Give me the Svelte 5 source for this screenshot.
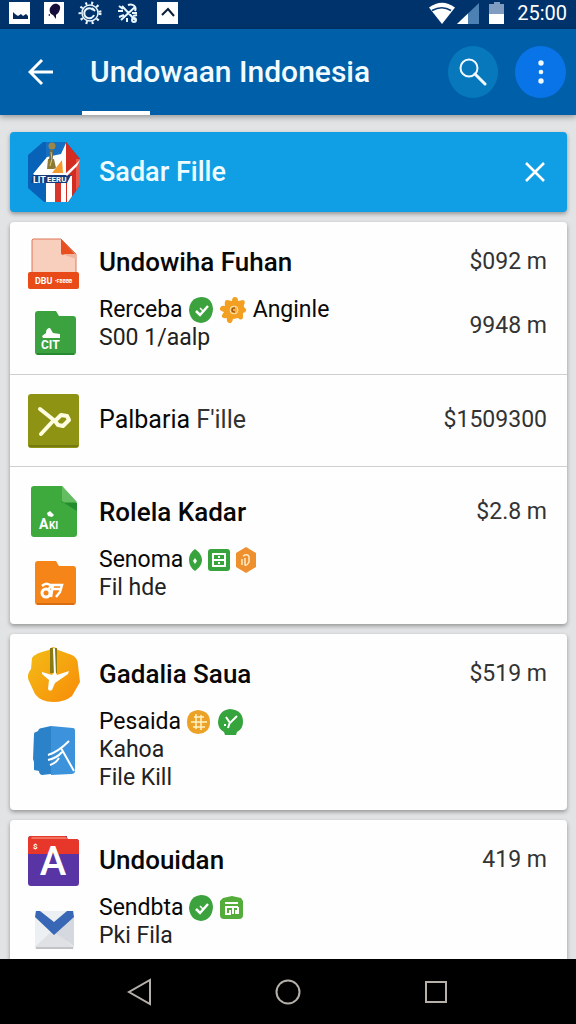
<script>
	let bannerOpen = true;

	const cards = [
		[
			{
				icon: "pdf",
				name: "Undowiha Fuhan",
				amount: "$092 m",
				subIcon: "greenFolder",
				sub: "Rerceba",
				badges: ["check", "flower"],
				after: "Anginle",
				lines: ["S00 1/aalp"],
				subAmount: "9948 m"
			},
			{ icon: "olive", name: "Palbaria", rest: "F'ille", light: true, amount: "$1509300" },
			{
				icon: "greenDoc",
				name: "Rolela Kadar",
				amount: "$2.8 m",
				subIcon: "orangeFolder",
				sub: "Senoma",
				badges: ["leaf", "grid", "hex"],
				lines: ["Fil hde"]
			}
		],
		[
			{
				icon: "gold",
				name: "Gadalia Saua",
				amount: "$519 m",
				subIcon: "blueBook",
				sub: "Pesaida",
				badges: ["coin", "plant"],
				lines: ["Kahoa", "File Kill"]
			}
		],
		[
			{
				icon: "letter",
				name: "Undouidan",
				amount: "419 m",
				subIcon: "mail",
				sub: "Sendbta",
				badges: ["check", "house"],
				lines: ["Pki Fila"]
			}
		]
	];
</script>

<svelte:head>
	<title>Undowaan Indonesia</title>
</svelte:head>

<div class="screen">
	<div class="status">
		<div class="status-group left">
			<svg width="22" height="24" viewBox="0 0 22 24">
				<rect y="1" width="21" height="22" fill="#fff" />
				<path d="M4 11v7h15v-3l-2-2-3 2-2-2-3 2-3-2z" fill="#06295c" />
			</svg>
			<svg width="20" height="24" viewBox="0 0 20 24">
				<rect y="1" width="20" height="22" fill="#fff" />
				<path d="M10 3c4-1 7 2 6 5-1 4-3 5-4 6v4l-3-4c-3-1-4-4-3-7 1-2 2-3 4-4zM4 14l2-1v2z" fill="#150f3c" />
			</svg>
			<svg width="26" height="24" viewBox="0 0 26 24" fill="none" stroke="#e8f6ff">
				<circle cx="13" cy="12" r="10" stroke-width="3" stroke-dasharray="2 4" />
				<circle cx="13" cy="12" r="8" stroke-width="1.5" />
				<path d="M16 9a5 5 0 1 0 1 5M15 7l3 3" stroke-width="2" />
			</svg>
			<svg width="24" height="24" viewBox="0 0 24 24" fill="none" stroke="#e8f6ff" stroke-width="2">
				<path d="M6 5l13 14M19 6L5 19M2 10h5M3 5l4 3M12 4c5-2 9 2 7 6M16 12h5M8 14l-5 2M11 17v4M17 15l4-1" />
				<circle cx="18" cy="19" r="2" />
			</svg>
			<svg class="last" width="21" height="24" viewBox="0 0 21 24">
				<rect y="1" width="21" height="22" fill="#fff" />
				<path d="M5 14l6-6 6 7" fill="none" stroke="#0b1d36" stroke-width="2" />
			</svg>
		</div>
		<div class="status-group">
			<svg width="26" height="24" viewBox="0 0 26 24">
				<path d="M0 6.500Q13-3 26 6.500L13 23z" fill="#fff" />
				<path d="M3 9.500Q13 4 22 9.500" fill="none" stroke="#06376f" stroke-width="1.500" />
			</svg>
			<svg width="22" height="24" viewBox="0 0 22 24">
				<path d="M0 23L22 2v21z" fill="#4d80b3" />
				<path d="M0 23L11 12.500V23z" fill="#fff" />
			</svg>
			<svg class="battery" width="16" height="24" viewBox="0 0 16 24">
				<path d="M5 1h6v2h4v11H0V3h5z" fill="#809cc0" />
				<path d="M0 13h15v10H0z" fill="#fff" />
			</svg>
			<span class="clock">25:00</span>
		</div>
	</div>

	<header class="appbar">
		<button class="plain" aria-label="Back">
			<svg width="26" height="28" viewBox="0 0 26 28" fill="none" stroke="#fff" stroke-width="3">
				<path d="M25 14H3M14 2L2 14l12 12" />
			</svg>
		</button>
		<h1>Undowaan Indonesia</h1>
		<button class="round" aria-label="Search">
			<svg width="28" height="28" viewBox="0 0 28 28" fill="none" stroke="#effaff">
				<circle cx="10" cy="10" r="8.500" stroke-width="2" />
				<path d="M16 16l10 10" stroke-width="3" stroke-linecap="round" />
			</svg>
		</button>
		<button class="round more" aria-label="More options">
			<svg width="8" height="28" viewBox="0 0 8 28" fill="#effaff">
				<circle cx="4" cy="5" r="2.700" />
				<circle cx="4" cy="14" r="2.300" />
				<circle cx="4" cy="23" r="2.700" />
			</svg>
		</button>
	</header>

	<main>
		{#if bannerOpen}
			<section class="banner">
				<svg width="52" height="62" viewBox="0 0 52 62">
					<clipPath id="octagon"><path d="M15 1h23l14 17v26L40 61H16L0 47V14z" /></clipPath>
					<g clip-path="url(#octagon)">
						<path d="M0 0h52v62H0z" fill="#0863b8" />
						<path d="M18 0h20v62H18z" fill="#1670c1" />
						<path d="M5 33l14-17 14-3 5-11v60H18V42z" fill="#fff" />
						<path d="M38 0l14 15v47H38z" fill="#d32c20" />
						<path d="M27 39h6v23h-6z" fill="#d8352d" />
						<path d="M39 35h5v27h-5z" fill="#fff" />
						<path d="M48 18h4v40h-4z" fill="#e9564c" />
						<path d="M34 19l1 13H24z" fill="#f29a2b" />
						<path d="M5 34h38l-4 8H3z" fill="#173b79" />
						<path d="M37 33l15-14-3 6-10 10z" fill="#fff" />
						<text x="5" y="42" class="icon-text" font-size="9">LIT</text>
						<text x="19" y="41" class="icon-text" font-size="8">EERU</text>
						<path d="M20 18h6l2 9-2 1h-7z" fill="#8b7937" />
						<path d="M22 9h3v10h-4z" fill="#6f6a4b" />
						<circle cx="24" cy="5" r="3.500" fill="#9a8648" />
						<path d="M23 11l1 7-2 7" fill="none" stroke="#ddc777" />
					</g>
				</svg>
				<h2>Sadar Fille</h2>
				<button class="plain" aria-label="Close" on:click={() => (bannerOpen = false)}>
					<svg width="20" height="20" viewBox="0 0 20 20" fill="none" stroke="#fff" stroke-width="2.500">
						<path d="M1 1l18 18M19 1L1 19" />
					</svg>
				</button>
			</section>
		{/if}

		{#each cards as rows}
			<section class="card">
				{#each rows as row}
					<article class="row">
						{@render appIcon(row.icon)}
						<h3 class:light={row.light}>{row.name} {#if row.rest}<span>{row.rest}</span>{/if}</h3>
						<span class="amount">{row.amount}</span>
						{#if row.sub}
							<div class="sub-icon">{@render fileIcon(row.subIcon)}</div>
							<div class="details">
								<p class="sub">
									<span>{row.sub}</span>
									{#each row.badges as name}{@render badge(name)}{/each}
									{#if row.after}<span>{row.after}</span>{/if}
								</p>
								{#each row.lines as line}
									<p>{line}</p>
								{/each}
							</div>
							<span class="amount">{row.subAmount ?? ""}</span>
						{/if}
					</article>
				{/each}
			</section>
		{/each}
	</main>

	<nav>
		<button class="plain" aria-label="Navigate back">
			<svg width="26" height="28" viewBox="0 0 26 28"><path d="M23 2v24L2 14z" /></svg>
		</button>
		<button class="plain" aria-label="Home">
			<svg width="26" height="28" viewBox="0 0 26 28"><circle cx="13" cy="14" r="11.500" /></svg>
		</button>
		<button class="plain" aria-label="Recent apps">
			<svg width="26" height="28" viewBox="0 0 26 28"><rect x="3" y="4" width="20" height="20" /></svg>
		</button>
	</nav>
</div>

{#snippet appIcon(name)}
	<svg width="52" height="56" viewBox="0 0 52 56">
		{#if name === "pdf"}
			<path d="M5 5h28l15 15v22H4V6z" fill="#f8cfbc" stroke="#df7658" />
			<path d="M33 5l15 16H35q-2 0-2-2z" fill="#e9501f" />
			<path d="M34 20h14v5z" fill="#eeb49d" />
			<rect y="38" width="51" height="17" rx="2" fill="#e84a18" />
			<text x="7" y="50" class="icon-text" font-size="9">DBU</text>
			<text x="27" y="49" class="icon-text" font-size="5">•FBBBB</text>
		{:else if name === "olive"}
			<rect y="2" width="51" height="54" rx="3" fill="#8e9314" />
			<path d="M1 54h49" stroke="#757b10" stroke-width="2" />
			<path d="M12 17l15 12M13 42l13-14" fill="none" stroke="#fffde0" stroke-width="4" stroke-linecap="round" />
			<path d="M27 29l6-6 6 1 2 4-6 6-5-1z" fill="#8e9314" stroke="#fffde0" stroke-width="4" stroke-linejoin="round" />
		{:else if name === "greenDoc"}
			<path d="M6 2h28l15 17v31q0 3-3 3H6q-3 0-3-3V5q0-3 3-3z" fill="#3eaa3e" />
			<path d="M33 3v13q0 3 3 3h13v8L33 17z" fill="#238c2c" />
			<path d="M34 2l15 16H36q-2 0-2-2z" fill="#65bd61" />
			<path d="M19 29l3-2 4 4-2 2-4-1z" fill="#fff" />
			<text x="11" y="45" class="icon-text" font-size="14">A</text>
			<text x="21" y="45" class="icon-text" font-size="10">KI</text>
		{:else if name === "gold"}
			<linearGradient id="gold" x2="1" y2="1">
				<stop stop-color="#f3be17" />
				<stop offset="1" stop-color="#f88b08" />
			</linearGradient>
			<path d="M21 4q4-6 9 0l14 5q6 3 6 10l2 17-8 14q-7 6-19 6-12 0-18-8L1 35Q-2 29 3 23l1-11q3-5 17-8z" fill="url(#gold)" />
			<path d="M22 2h7v25h-7z" fill="#8a7a14" />
			<path d="M26 3l1 26" stroke="#fff" stroke-width="2" stroke-linecap="round" />
			<path d="M14 26l10 3 3-4 2 4 12-4-1 3-13 9-3 7q-3 2-4-1l1-9-7-6z" fill="#fff" />
		{:else}
			<path d="M3 4h36v3h9q3 0 3 3v41q0 3-3 3H3q-3 0-3-3V7q0-3 3-3z" fill="#5934a4" />
			<path d="M3 4h35l2 3h8q3 0 3 3v12H0V7q0-3 3-3z" fill="#e7372b" />
			<path d="M4 5h34l1 2H3z" fill="#ef725f" />
			<text x="5" y="17" class="icon-text" font-size="8">$</text>
			<text x="25" y="43" class="icon-text letter" font-size="40" text-anchor="middle">A</text>
		{/if}
	</svg>
{/snippet}

{#snippet fileIcon(name)}
	{#if name === "greenFolder" || name === "orangeFolder"}
		<svg width="52" height="46" viewBox="0 0 52 46">
			<path
				d="M10 1h18l3 5h14q3 0 3 3v33q0 3-3 3H10q-3 0-3-3V4q0-3 3-3z"
				fill={name === "greenFolder" ? "#3ca13f" : "#f58518"}
			/>
			<path d="M9 44h37" stroke={name === "greenFolder" ? "#278a31" : "#d96d14"} stroke-width="2" />
			{#if name === "greenFolder"}
				<path d="M14 26l4-3q0-5 4-5l3 5 7 1v4H15z" fill="#fff" />
				<text x="13" y="39" class="icon-text" font-size="12">CIT</text>
			{:else}
				<circle cx="18" cy="33" r="4" fill="none" stroke="#fff" stroke-width="3" />
				<path d="M14 26q4-4 8-1h12l-2 7-4 5M24 29h9M25 24l-2 13M20 30l3-4" fill="none" stroke="#fff" stroke-width="2.500" />
			{/if}
		</svg>
	{:else if name === "blueBook"}
		<svg width="52" height="54" viewBox="0 0 52 54">
			<path d="M6 12q0-2 2-2l2-1q1-3 4-3l9-2v48l-9 1q-3-1-3-4l-5-1v-8l-1-3z" fill="#2c82c9" />
			<path d="M23 4l22 2q2 0 2 3v40q0 3-4 3l-20 1z" fill="#3c93db" />
			<path d="M20 33q10-3 21-14M20 38q9-2 14-8M22 43q6-2 9-7M33 26l13 23" fill="none" stroke="#fff" stroke-width="2" />
		</svg>
	{:else}
		<svg width="52" height="46" viewBox="0 0 52 46">
			<path d="M7 3h39v36H7z" fill="#edf0f2" />
			<path d="M7 39l18-17 21 17-1 2H8z" fill="#dfe1e5" />
			<path d="M27 25l19-17v30z" fill="#d5d8de" />
			<path d="M8 3h4l14 11L39 3h6l1 6-20 18L7 9z" fill="#3867b5" />
			<path d="M8 40h37" stroke="#c3c3c7" stroke-width="2" />
		</svg>
	{/if}
{/snippet}

{#snippet badge(name)}
	{#if name === "leaf"}
		<svg width="13" height="24" viewBox="0 0 13 24">
			<path d="M6 1q7 5 7 11T6 23Q0 19 0 12T6 1z" fill="#37a33c" />
			<path d="M6 10l2 3-2 3-2-3z" fill="#fff" />
		</svg>
	{:else if name === "grid"}
		<svg width="22" height="24" viewBox="0 0 22 24" fill="none" stroke="#fff" stroke-width="2">
			<rect y="1" width="22" height="22" rx="3" fill="#37a33c" stroke="none" />
			<path d="M5 6h12v12H5zM5 12h12M11 8v2M11 14v2" />
		</svg>
	{:else if name === "hex"}
		<svg width="20" height="26" viewBox="0 0 20 26">
			<path d="M10 0l10 6v14l-10 6-10-6V6z" fill="#ee902e" />
			<path d="M7 9q5-3 6 1v5q-2 4-4 3v-7M6 12v6" fill="none" stroke="#ffeac3" stroke-width="1.500" />
		</svg>
	{:else if name === "flower"}
		<svg width="27" height="28" viewBox="0 0 27 28">
			<path
				d="M12 5q0-4 3-4t3 4l5-1q3 1 1 5-1 2 2 4 1 3-3 4v5q-2 3-5 0l-5 1q-1 5-4 4-3-1-2-5-6 1-5-3l2-3q-5-1-4-4 1-3 5-2-1-6 2-6z"
				fill="#f29f22"
			/>
			<circle cx="14" cy="14" r="4" fill="#f6b344" stroke="#fbe2a8" />
			<path d="M15 12q-3 0-3 2t3 2" fill="none" stroke="#a85412" stroke-width="1.500" />
		</svg>
	{:else}
		<svg width="25" height="26" viewBox="0 0 25 26" fill="none" stroke="#fff" stroke-width="2">
			{#if name === "check"}
				<path d="M12 0q11 0 12 12-1 13-12 14Q1 25 0 13 1 1 12 0z" fill="#3ba23d" stroke="none" />
				<path d="M7 14l4 4 8-9" stroke-width="2.500" />
				<path d="M11 11l3 3" stroke-width="1.500" />
			{:else if name === "coin"}
				<path d="M11 1q12 1 12 12 0 11-12 12Q0 24 0 13 0 2 11 1z" fill="#eca226" stroke="none" />
				<path d="M7 8h10M4 13h16M6 18h12M9 5v15M14 6v15" stroke="#fff3c4" stroke-width="1.500" />
			{:else if name === "plant"}
				<path d="M12 0q13 1 13 13 0 7-6 10l-1 3H7l-1-3Q0 20 0 13 1 1 12 0z" fill="#36a43c" stroke="none" />
				<path d="M8 8l4 6 7-7M12 13l-2 6M6 16h2" />
			{:else}
				<path d="M3 3l9-2 9 2 2 3v14q0 4-4 4H4q-4 0-4-4V6z" fill="#54ad3b" stroke="none" />
				<path d="M5 8h13M5 12h13M6 12v7h4v-4M13 12v7M16 15v4M18 12v7" />
			{/if}
		</svg>
	{/if}
{/snippet}

<style>
	:global(body) {
		margin: 0;
	}

	.screen {
		display: flex;
		flex-direction: column;
		height: 100vh;
		background: #e2e3e4;
		color: #080808;
		font-family: Roboto, "Liberation Sans", sans-serif;
	}

	svg {
		display: block;
		flex: none;
	}

	h1, h2, h3, p {
		margin: 0;
		font-weight: 500;
		white-space: nowrap;
	}

	button {
		display: flex;
		align-items: center;
		justify-content: center;
		padding: 0;
		border: none;
		cursor: pointer;
	}

	.plain {
		background: transparent;
	}

	.icon-text {
		fill: #fff;
		font-weight: 700;
	}

	.letter {
		font-weight: 500;
	}

	.status {
		display: flex;
		flex: none;
		align-items: center;
		justify-content: space-between;
		height: 29px;
		padding: 0 9px 4px;
		box-sizing: border-box;
		background: #00336b;
	}

	.status-group {
		display: flex;
		align-items: center;
		gap: 2px;
	}

	.status-group.left {
		gap: 13px;
	}

	.last {
		margin-left: 4px;
	}

	.battery {
		margin: 0 10px 0 8px;
	}

	.clock {
		color: #fff;
		font-size: 20px;
		line-height: 24px;
	}

	.appbar {
		position: relative;
		z-index: 1;
		display: flex;
		flex: none;
		align-items: center;
		height: 86px;
		padding: 0 10px 0 28px;
		box-sizing: border-box;
		background: #005fa9;
		box-shadow: 0 2px 6px rgba(0, 0, 0, 0.35);
	}

	.appbar::after {
		content: "";
		position: absolute;
		bottom: 0;
		left: 82px;
		width: 68px;
		height: 4px;
		background: #fff;
	}

	h1 {
		flex: 1;
		padding-left: 36px;
		color: #f2fcff;
		font-size: 30px;
		line-height: 40px;
	}

	.round {
		width: 50px;
		height: 52px;
		border-radius: 50%;
		background: #0878bd;
	}

	.round.more {
		width: 51px;
		margin-left: 17px;
		background: #0874e8;
	}

	main {
		display: flex;
		flex: 1;
		flex-direction: column;
		gap: 10px;
		min-height: 0;
		padding: 17px 9px 10px 10px;
		overflow-y: auto;
		scrollbar-width: none;
	}

	.banner, .card {
		flex: none;
		border-radius: 4px;
		box-shadow: 0 2px 4px rgba(0, 0, 0, 0.35);
	}

	.banner {
		display: flex;
		align-items: center;
		height: 80px;
		padding: 0 22px 0 18px;
		background: #109fe5;
	}

	h2 {
		flex: 1;
		padding-left: 19px;
		color: #effcff;
		font-size: 27px;
		line-height: 32px;
	}

	.card {
		background: #fefefe;
	}

	.row {
		display: grid;
		grid-template-columns: 52px 1fr auto;
		column-gap: 19px;
		row-gap: 6px;
		align-items: center;
		padding: 12px 20px 18px 18px;
	}

	.row + .row {
		padding-top: 17px;
		border-top: 1px solid #cfcfcf;
	}

	h3 {
		font-size: 26px;
		line-height: 32px;
	}

	h3.light {
		font-size: 25px;
		font-weight: 400;
	}

	h3.light span {
		color: #333;
	}

	.amount {
		color: #333;
		font-size: 23px;
		line-height: 32px;
		text-align: right;
	}

	.sub-icon {
		padding-top: 14px;
		align-self: start;
	}

	.details {
		align-self: start;
	}

	p {
		color: #222;
		font-size: 23px;
		font-weight: 400;
		line-height: 28px;
	}

	.sub {
		display: flex;
		align-items: center;
		gap: 6px;
		height: 28px;
		color: #080808;
	}

	nav {
		display: flex;
		flex: none;
		align-items: center;
		justify-content: center;
		gap: 122px;
		height: 65px;
		background: #000;
	}

	nav svg {
		fill: none;
		stroke: #b5b1aa;
		stroke-width: 2;
	}
</style>
